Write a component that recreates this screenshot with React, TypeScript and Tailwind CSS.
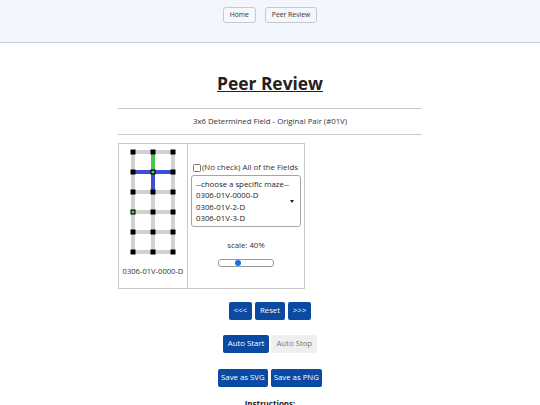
import React from 'react';

const font = { fontFamily: "'Open Sans', 'Noto Sans', sans-serif" };

function Maze() {
  const xs = [6, 26, 46];
  const ys = [6, 26, 46, 66, 86, 106];
  return (
    <svg width="52" height="112" viewBox="0 0 52 112">
      {xs.map((x) => (
        <rect key={'v' + x} x={x - 2} y={6} width={4} height={100} fill="#d0d0d0" />
      ))}
      {ys.map((y) => (
        <rect key={'h' + y} x={6} y={y - 2} width={40} height={4} fill="#d0d0d0" />
      ))}
      <rect x={24} y={6} width={4} height={20} fill="#4cc24c" />
      <rect x={6} y={24} width={40} height={4} fill="#3b4fd8" />
      <rect x={24} y={26} width={4} height={20} fill="#3b4fd8" />
      {ys.map((y) =>
        xs.map((x) => (
          <rect key={x + '-' + y} x={x - 2.5} y={y - 2.5} width={5} height={5} fill="#000" />
        ))
      )}
      <circle cx={26} cy={26} r={1.6} fill="#3ddc3d" />
      <circle cx={6} cy={66} r={1.6} fill="#3ddc3d" />
    </svg>
  );
}

function BlueButton({ children, wide = false }: { children: React.ReactNode; wide?: boolean }) {
  return (
    <button className={`bg-[#0b4aa2] text-white text-[7.8px] h-[18px] rounded-[2px] ${wide ? 'px-[3px]' : 'px-[5px]'}`}>
      {children}
    </button>
  );
}

export default function App() {
  return (
    <div className="w-[540px] h-[405px] overflow-hidden bg-white text-[#222]" style={font}>
      {/* header */}
      <div className="h-[43px] bg-[#f4f6fd] border-b border-[#c9ccd8] flex justify-center items-start pt-[7px] gap-[9px]">
        <button className="h-[16px] px-[6px] text-[6.8px] text-[#333] bg-[#f6f7fb] border border-[#c5c9d6] rounded-[3px]">
          Home
        </button>
        <button className="h-[16px] px-[6px] text-[6.8px] text-[#333] bg-[#f6f7fb] border border-[#c5c9d6] rounded-[3px]">
          Peer Review
        </button>
      </div>

      <div className="flex flex-col items-center">
        <h1 className="mt-[27px] text-[17.4px] font-bold underline leading-[26px] text-[#222]">Peer Review</h1>

        <div className="mt-[12px] w-[304px] border-t border-b border-[#c8c8c8] h-[27px] flex items-center justify-center text-[7.8px] text-[#333]">
          3x6 Determined Field - Original Pair (#01V)
        </div>

        {/* viewer */}
        <div className="w-[304px] mt-[8px]">
          <table className="border border-[#c8c8c8] border-collapse">
            <tbody>
              <tr>
                <td className="w-[69px] h-[145px] border border-[#c8c8c8] align-top">
                  <div className="flex flex-col items-center pt-[2px]">
                    <Maze />
                    <div className="mt-[8px] text-[7.6px] text-[#333] whitespace-nowrap">0306-01V-0000-D</div>
                  </div>
                </td>
                <td className="w-[117px] border border-[#c8c8c8] align-top">
                  <div className="flex flex-col items-center pt-[18px]">
                    <label className="flex items-center self-start ml-[5px] h-[11px] leading-[11px] text-[7.9px] text-[#333] whitespace-nowrap">
                      <span className="w-[8px] h-[8px] border border-[#777] rounded-[1.5px] bg-white mr-[1px]" />
                      (No check) All of the Fields
                    </label>
                    <div className="relative mt-[2px] w-[110px] h-[52px] border border-[#a5a5a5] rounded-[3px] overflow-hidden text-[7.8px] leading-[11.3px] text-[#222] pl-[4px] pt-[3px] whitespace-nowrap">
                      <div>--choose a specific maze--</div>
                      <div>0306-01V-0000-D</div>
                      <div>0306-01V-2-D</div>
                      <div>0306-01V-3-D</div>
                      <div>0306-01V-4-D</div>
                      <span className="absolute right-[6px] top-[24px] w-0 h-0 border-l-[2.5px] border-r-[2.5px] border-t-[3px] border-l-transparent border-r-transparent border-t-[#222]" />
                    </div>
                    <div className="mt-[12px] h-[12px] leading-[12px] text-[7.8px] text-[#333]">scale: 40%</div>
                    <div className="relative mt-[8px] w-[56px] h-[8px] border border-[#9a9a9a] rounded-[3px] bg-white">
                      <span className="absolute left-[16px] top-0 w-[6px] h-[6px] rounded-full bg-[#1a6fe0]" />
                    </div>
                  </div>
                </td>
              </tr>
            </tbody>
          </table>
        </div>

        <div className="mt-[13px] flex gap-[3px]">
          <BlueButton>&lt;&lt;&lt;</BlueButton>
          <BlueButton>Reset</BlueButton>
          <BlueButton>&gt;&gt;&gt;</BlueButton>
        </div>

        <div className="mt-[15px] flex gap-[2px]">
          <BlueButton>Auto Start</BlueButton>
          <button className="bg-[#efefef] text-[#777] text-[7.8px] h-[18px] px-[5px] rounded-[2px]">Auto Stop</button>
        </div>

        <div className="mt-[16px] flex gap-[3px]">
          <BlueButton wide>Save as SVG</BlueButton>
          <BlueButton wide>Save as PNG</BlueButton>
        </div>

        <div className="mt-[11px] text-[8px] font-bold text-[#222]">Instructions:</div>
      </div>
    </div>
  );
}
